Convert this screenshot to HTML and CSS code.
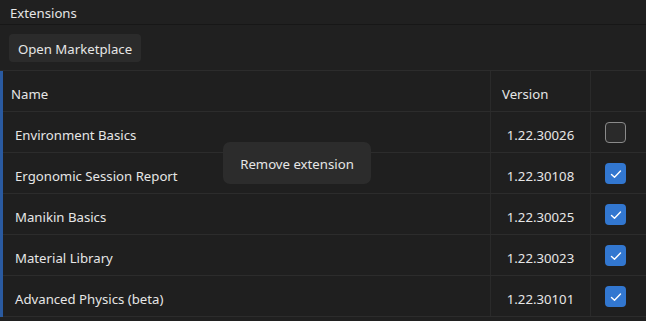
FILE: index.html
```html
<!DOCTYPE html>
<html>
<head>
<meta charset="utf-8">
<link rel="stylesheet" href="styles.css">
</head>
<body>
<div class="panel">
  <div class="title">Extensions</div>
  <div class="toolbar"><button class="btn">Open Marketplace</button></div>
  <div class="table">
    <div class="row head">
      <div class="c-name">Name</div>
      <div class="c-ver">Version</div>
      <div class="c-chk"></div>
    </div>
    <div class="row">
      <div class="c-name">Environment Basics</div>
      <div class="c-ver">1.22.30026</div>
      <div class="c-chk"><span class="box"></span></div>
    </div>
    <div class="row">
      <div class="c-name">Ergonomic Session Report</div>
      <div class="c-ver">1.22.30108</div>
      <div class="c-chk"><span class="box on"><svg viewBox="0 0 20 20" width="20" height="20"><path d="M5.5 10.5 L8.5 13.2 L14.5 7" fill="none" stroke="#fff" stroke-width="1.4" stroke-linecap="round" stroke-linejoin="round"/></svg></span></div>
    </div>
    <div class="row">
      <div class="c-name">Manikin Basics</div>
      <div class="c-ver">1.22.30025</div>
      <div class="c-chk"><span class="box on"><svg viewBox="0 0 20 20" width="20" height="20"><path d="M5.5 10.5 L8.5 13.2 L14.5 7" fill="none" stroke="#fff" stroke-width="1.4" stroke-linecap="round" stroke-linejoin="round"/></svg></span></div>
    </div>
    <div class="row">
      <div class="c-name">Material Library</div>
      <div class="c-ver">1.22.30023</div>
      <div class="c-chk"><span class="box on"><svg viewBox="0 0 20 20" width="20" height="20"><path d="M5.5 10.5 L8.5 13.2 L14.5 7" fill="none" stroke="#fff" stroke-width="1.4" stroke-linecap="round" stroke-linejoin="round"/></svg></span></div>
    </div>
    <div class="row">
      <div class="c-name">Advanced Physics (beta)</div>
      <div class="c-ver">1.22.30101</div>
      <div class="c-chk"><span class="box on"><svg viewBox="0 0 20 20" width="20" height="20"><path d="M5.5 10.5 L8.5 13.2 L14.5 7" fill="none" stroke="#fff" stroke-width="1.4" stroke-linecap="round" stroke-linejoin="round"/></svg></span></div>
    </div>
    <div class="tooltip">Remove extension</div>
  </div>
</div>
</body>
</html>
```
FILE: styles.css
```css
* { box-sizing: border-box; }
html, body { margin: 0; padding: 0; background: #202020; }
body { width: 646px; height: 321px; overflow: hidden; font-family: "Noto Sans", "Open Sans", sans-serif; font-size: 13.2px; color: #e6e6e6; }
.panel { display: flex; flex-direction: column; }
.title { height: 25px; line-height: 24px; padding: 1px 0 0 10px; border-bottom: 1px solid #171717; background: #202020; }
.toolbar { height: 46px; padding: 9px 0 0 9px; border-bottom: 1px solid #2c2c2c; background: #202020; }
.btn { height: 28px; width: 132px; border: none; border-radius: 4px; background: #2b2b2b; color: #e6e6e6; font-family: inherit; font-size: 13.2px; padding: 1px 0 0; cursor: default; }
.table { position: relative; border-left: 3px solid #2a5aa0; background: #1f1f1f; }
.row { display: grid; grid-template-columns: 487px 100px 56px; height: 41px; border-bottom: 1px solid #2c2c2c; align-items: stretch; }
.row > div { display: flex; align-items: center; }
.c-name, .c-ver { padding-top: 5px; }
.c-name { padding-left: 12px; }
.head .c-name { padding-left: 8px; }
.c-ver { justify-content: center; border-left: 1px solid #2a2a2a; }
.head .c-ver { justify-content: flex-start; padding-left: 11px; }
.c-chk { justify-content: flex-start; padding: 1px 0 0 14px; border-left: 1px solid #2a2a2a; }
.box { width: 21px; height: 21px; border-radius: 4px; border: 1px solid #8a8a8a; background: #2a2a2a; display: block; }
.box.on { border: none; background: #3277d0; }
.box svg { display: block; margin: 0.5px; }
.tooltip { position: absolute; left: 220px; top: 71px; width: 148px; height: 42px; padding-top: 2px; border-radius: 7px; background: #2c2c2c; display: flex; align-items: center; justify-content: center; color: #e6e6e6; }
```
